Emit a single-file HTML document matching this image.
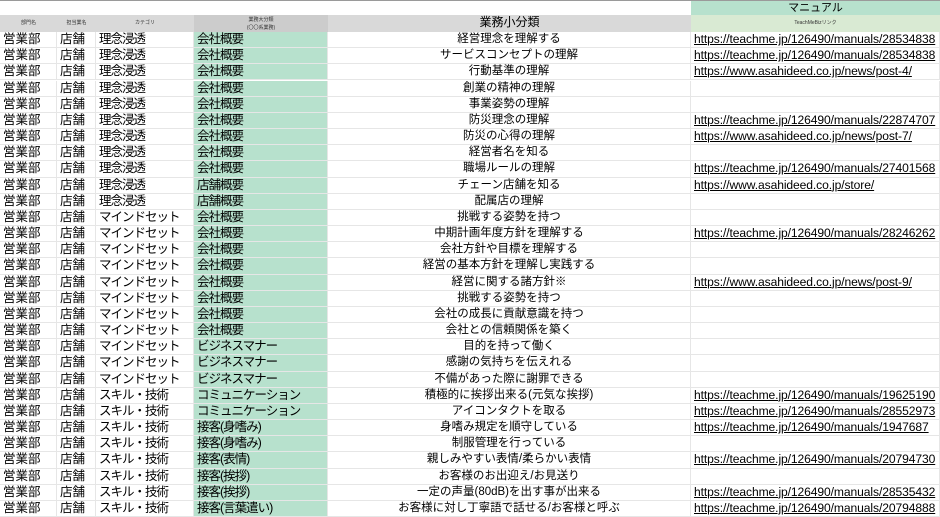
<!DOCTYPE html>
<html><head><meta charset="utf-8"><style>
body{margin:0;width:940px;height:517px;overflow:hidden;background:#fff;font-family:"Liberation Sans","Noto Sans CJK JP",sans-serif;color:#000}
.r{position:absolute;left:0;width:940px;display:flex;border-bottom:1px solid #e6e6e6;box-sizing:border-box}
.r div{box-sizing:border-box;border-right:1px solid #e6e6e6;white-space:nowrap;overflow:hidden;padding-left:3px;font-size:12.5px}
.a{width:57px}.b{width:39px}.c{width:98px;letter-spacing:-1px}.d{width:134px;background:#b7e1cd;letter-spacing:-1px}.e{width:363px;text-align:center;font-size:11.5px!important;padding-left:0!important}.f{width:249px;text-decoration:underline;font-size:12.1px!important;letter-spacing:-0.1px}
</style></head><body>
<div style="position:absolute;left:0;top:0;width:940px;height:1px;background:#9a9a9a"></div>
<div style="position:absolute;top:1px;left:691px;width:249px;height:14px;background:#b7e1cd;font-size:11px;text-align:center;line-height:14px">マニュアル</div>
<div style="position:absolute;top:15px;left:0;width:940px;height:17px;background:#d9d9d9;font-size:5px;color:#333;line-height:17px">
<span style="position:absolute;left:0;width:57px;text-align:center">部門名</span>
<span style="position:absolute;left:57px;width:39px;text-align:center">担当業名</span>
<span style="position:absolute;left:96px;width:98px;text-align:center">カテゴリ</span>
<span style="position:absolute;left:194px;top:0;width:134px;height:17px;background:#cccccc;text-align:center;line-height:8px;padding-top:1px;box-sizing:border-box">業務大分類<br>(〇〇系業務)</span>
<span style="position:absolute;left:328px;width:363px;text-align:center;font-size:12px;color:#000;line-height:15px">業務小分類</span>
<span style="position:absolute;left:691px;width:249px;height:17px;background:#d9ead3;text-align:center">TeachMeBizリンク</span>
</div>
<div id="rows"></div>
<script>
var d=[
["理念浸透","会社概要","経営理念を理解する","https://teachme.jp/126490/manuals/28534838"],
["理念浸透","会社概要","サービスコンセプトの理解","https://teachme.jp/126490/manuals/28534838"],
["理念浸透","会社概要","行動基準の理解","https://www.asahideed.co.jp/news/post-4/"],
["理念浸透","会社概要","創業の精神の理解",""],
["理念浸透","会社概要","事業姿勢の理解",""],
["理念浸透","会社概要","防災理念の理解","https://teachme.jp/126490/manuals/22874707"],
["理念浸透","会社概要","防災の心得の理解","https://www.asahideed.co.jp/news/post-7/"],
["理念浸透","会社概要","経営者名を知る",""],
["理念浸透","会社概要","職場ルールの理解","https://teachme.jp/126490/manuals/27401568"],
["理念浸透","店舗概要","チェーン店舗を知る","https://www.asahideed.co.jp/store/"],
["理念浸透","店舗概要","配属店の理解",""],
["マインドセット","会社概要","挑戦する姿勢を持つ",""],
["マインドセット","会社概要","中期計画年度方針を理解する","https://teachme.jp/126490/manuals/28246262"],
["マインドセット","会社概要","会社方針や目標を理解する",""],
["マインドセット","会社概要","経営の基本方針を理解し実践する",""],
["マインドセット","会社概要","経営に関する諸方針※","https://www.asahideed.co.jp/news/post-9/"],
["マインドセット","会社概要","挑戦する姿勢を持つ",""],
["マインドセット","会社概要","会社の成長に貢献意識を持つ",""],
["マインドセット","会社概要","会社との信頼関係を築く",""],
["マインドセット","ビジネスマナー","目的を持って働く",""],
["マインドセット","ビジネスマナー","感謝の気持ちを伝えれる",""],
["マインドセット","ビジネスマナー","不備があった際に謝罪できる",""],
["スキル・技術","コミュニケーション","積極的に挨拶出来る(元気な挨拶)","https://teachme.jp/126490/manuals/19625190"],
["スキル・技術","コミュニケーション","アイコンタクトを取る","https://teachme.jp/126490/manuals/28552973"],
["スキル・技術","接客(身嗜み)","身嗜み規定を順守している","https://teachme.jp/126490/manuals/1947687"],
["スキル・技術","接客(身嗜み)","制服管理を行っている",""],
["スキル・技術","接客(表情)","親しみやすい表情/柔らかい表情","https://teachme.jp/126490/manuals/20794730"],
["スキル・技術","接客(挨拶)","お客様のお出迎え/お見送り",""],
["スキル・技術","接客(挨拶)","一定の声量(80dB)を出す事が出来る","https://teachme.jp/126490/manuals/28535432"],
["スキル・技術","接客(言葉遣い)","お客様に対し丁寧語で話せる/お客様と呼ぶ","https://teachme.jp/126490/manuals/20794888"]];
var h="",H=16.17;
d.forEach(function(r,i){var t=32+i*H;
h+='<div class="r" style="top:'+t+'px;height:'+H+'px;line-height:'+(H-1)+'px"><div class="a">営業部</div><div class="b">店舗</div><div class="c">'+r[0]+'</div><div class="d">'+r[1]+'</div><div class="e">'+r[2]+'</div><div class="f">'+r[3]+'</div></div>';});
document.getElementById("rows").innerHTML=h;
</script>
</body></html>
